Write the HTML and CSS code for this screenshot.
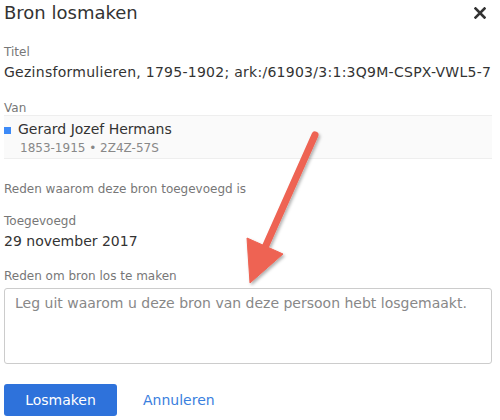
FILE: index.html
```html
<!DOCTYPE html>
<html lang="nl">
<head>
    <meta charset="UTF-8">
    <meta name="viewport" content="width=device-width, initial-scale=1.0">
    <title>Bron losmaken</title>
    <link rel="stylesheet" href="styles.css">
</head>
<body>
    <div class="dialog">
        <div class="dialog-header">
            <div class="dialog-title">Bron losmaken</div>
            <button class="close-btn" aria-label="Sluiten">
                <svg width="12" height="12" viewBox="0 0 12 12">
                    <path d="M1.5 1.5 L10.5 10.5 M10.5 1.5 L1.5 10.5" stroke="#333" stroke-width="2.6" stroke-linecap="square"/>
                </svg>
            </button>
        </div>

        <div class="field field-title">
            <div class="label">Titel</div>
            <div class="value nowrap source-title">Gezinsformulieren, 1795-1902; ark:/61903/3:1:3Q9M-CSPX-VWL5-7</div>
        </div>

        <div class="field field-from">
            <div class="label">Van</div>
            <div class="person">
                <span class="person-mark"></span>
                <div class="person-info">
                    <div class="person-name">Gerard Jozef Hermans</div>
                    <div class="person-meta">1853-1915 &bull; 2Z4Z-57S</div>
                </div>
            </div>
        </div>

        <div class="label reason-added">Reden waarom deze bron toegevoegd is</div>

        <div class="field field-date">
            <div class="label">Toegevoegd</div>
            <div class="value">29 november 2017</div>
        </div>

        <div class="field field-reason">
            <div class="label">Reden om bron los te maken</div>
            <textarea class="reason-input" placeholder="Leg uit waarom u deze bron van deze persoon hebt losgemaakt."></textarea>
        </div>

        <div class="actions">
            <button class="primary-btn">Losmaken</button>
            <a class="cancel-link" href="#">Annuleren</a>
        </div>
    </div>

    <!-- annotation arrow drawn over the dialog -->
    <svg class="annotation" width="500" height="420" viewBox="0 0 500 420">
        <defs>
            <filter id="shadow" x="-20%" y="-20%" width="140%" height="140%">
                <feDropShadow dx="1.5" dy="2" stdDeviation="1.5" flood-color="#000" flood-opacity="0.3"/>
            </filter>
        </defs>
        <g filter="url(#shadow)" fill="#ee6353" stroke="#ee6353">
            <line x1="315" y1="135" x2="263" y2="252" stroke-width="7" stroke-linecap="round"/>
            <polygon points="247,238 283,254 250,283" stroke-width="1" stroke-linejoin="round"/>
        </g>
    </svg>
</body>
</html>
```

FILE: styles.css
```css
body {
    margin: 0;
    font-family: "DejaVu Sans", Verdana, sans-serif;
    color: #333;
    background: white;
    overflow: hidden;
}

.dialog {
    width: 500px;
    height: 420px;
    padding: 0 8px 0 4px;
    box-sizing: border-box;
    position: relative;
}

.dialog-header {
    display: flex;
    justify-content: space-between;
    align-items: center;
    height: 26px;
}

.dialog-title {
    font-size: 18px;
    line-height: 26px;
    color: #333;
}

.close-btn {
    border: none;
    background: none;
    padding: 0;
    margin-right: 6px;
    display: flex;
}

.label {
    font-size: 12px;
    line-height: 16px;
    color: #777;
}

.value {
    font-size: 14px;
    line-height: 20px;
    color: #333;
    margin-top: 2px;
}

.nowrap {
    white-space: nowrap;
}

.source-title {
    letter-spacing: 0.27px;
}

.field-title {
    margin-top: 18px;
}

.field-from {
    margin-top: 18px;
}

.person {
    display: flex;
    align-items: flex-start;
    margin-top: -1px;
    padding: 3px 0 1px;
    background: #fafafa;
    border-top: 1px solid #eeeeee;
    border-bottom: 1px solid #eeeeee;
}

.person-mark {
    width: 7px;
    height: 7px;
    background: #3d8af7;
    margin-top: 8px;
    margin-right: 7px;
}

.person-name {
    font-size: 14px;
    line-height: 20px;
}

.person-meta {
    font-size: 12px;
    line-height: 18px;
    color: #888;
    margin-left: 2px;
}

.reason-added {
    margin-top: 22px;
}

.field-date {
    margin-top: 16px;
}

.field-reason {
    margin-top: 17px;
}

.reason-input {
    display: block;
    width: 100%;
    height: 76px;
    box-sizing: border-box;
    margin-top: 4px;
    padding: 4px 10px;
    border: 1px solid #cccccc;
    border-radius: 3px;
    font-family: "DejaVu Sans", Verdana, sans-serif;
    font-size: 14px;
    line-height: 20px;
    color: #333;
    resize: none;
}

.reason-input::placeholder {
    color: #888;
}

.actions {
    display: flex;
    align-items: center;
    gap: 26px;
    margin-top: 20px;
}

.primary-btn {
    width: 113px;
    height: 32px;
    border: none;
    border-radius: 3px;
    background: #2e72db;
    color: white;
    font-family: "DejaVu Sans", Verdana, sans-serif;
    font-size: 14px;
}

.cancel-link {
    font-size: 14px;
    color: #3a80de;
    text-decoration: none;
}

.annotation {
    position: absolute;
    left: 0;
    top: 0;
    pointer-events: none;
}
```
